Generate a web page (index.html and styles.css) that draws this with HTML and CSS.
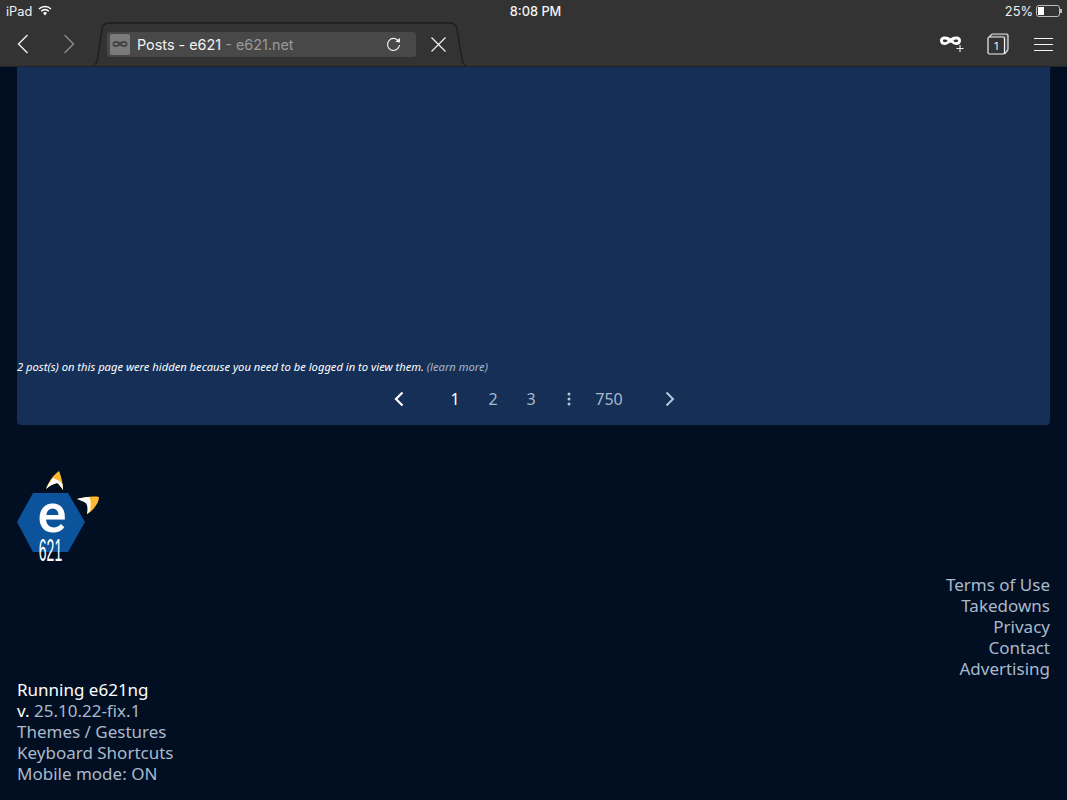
FILE: index.html
```html
<!DOCTYPE html>
<html lang="en">
<head>
  <meta charset="UTF-8">
  <title>Posts - e621</title>
  <link rel="stylesheet" href="styles.css">
</head>
<body>

  <!-- iOS status bar -->
  <div class="status-bar">
    <div class="status-left">
      <span>iPad</span>
      <svg class="wifi" width="14" height="11" viewBox="0 0 14 11">
        <path d="M1 4 A8.5 8.5 0 0 1 13 4" fill="none" stroke="#fff" stroke-width="1.6"/>
        <path d="M3.2 6.2 A5.4 5.4 0 0 1 10.8 6.2" fill="none" stroke="#fff" stroke-width="1.6"/>
        <path d="M5 8 L7 10.4 L9 8 A2.8 2.8 0 0 0 5 8 Z" fill="#fff"/>
      </svg>
    </div>
    <div class="status-time">8:08 PM</div>
    <div class="status-right">
      <span>25%</span>
      <div class="battery"><div class="battery-fill"></div></div>
      <div class="battery-tip"></div>
    </div>
  </div>

  <!-- Browser toolbar -->
  <div class="toolbar">
    <div class="nav-buttons">
      <svg width="12" height="20" viewBox="0 0 12 20"><path d="M10.5 1 L1.5 10 L10.5 19" fill="none" stroke="#f2f2f2" stroke-width="1.4"/></svg>
      <svg width="12" height="20" viewBox="0 0 12 20"><path d="M1.5 1 L10.5 10 L1.5 19" fill="none" stroke="#8a8a8a" stroke-width="1.4"/></svg>
    </div>

    <div class="tab">
      <svg class="tab-shape" width="376" height="45" viewBox="0 0 376 45">
        <path d="M0.5 44 C4 43 5 40 5.5 37 L10 7 C10.6 3 13 1 17 1 L358 1 C362 1 364.5 3 365 7 L370 37 C370.5 40 372 43 375 44" fill="none" stroke="#1d1d1d" stroke-width="1.3"/>
      </svg>
      <div class="address">
        <div class="favicon">
          <svg width="16" height="8" viewBox="0 0 16 8"><path d="M4 1 C6 1 7 2 8 2.5 C9 2 10 1 12 1 C14.5 1 15.5 2.5 15.5 4 C15.5 6 14 7 12 7 C10 7 9 5.5 8 5.5 C7 5.5 6 7 4 7 C2 7 0.5 6 0.5 4 C0.5 2.5 1.5 1 4 1 Z M4 2.8 C2.8 2.8 2.2 3.3 2.2 4 C2.2 4.8 3 5.2 4 5.2 C5.2 5.2 6 4.5 6.4 4 C6 3.5 5.2 2.8 4 2.8 Z M12 2.8 C10.8 2.8 10 3.5 9.6 4 C10 4.5 10.8 5.2 12 5.2 C13 5.2 13.8 4.8 13.8 4 C13.8 3.3 13.2 2.8 12 2.8 Z" fill="#3f3f3f" fill-rule="evenodd"/></svg>
        </div>
        <div class="address-text">Posts - e621 <span class="address-host">- e621.net</span></div>
        <svg class="reload" width="15" height="15" viewBox="0 0 15 15">
          <path d="M12.6 4.2 A6 6 0 1 0 13.5 8" fill="none" stroke="#f0f0f0" stroke-width="1.1"/>
          <path d="M9.2 4.8 L14 5.6 L14 1 Z" fill="#f0f0f0"/>
        </svg>
      </div>
      <svg class="tab-close" width="15" height="15" viewBox="0 0 15 15"><path d="M0.5 0.5 L14.5 14.5 M14.5 0.5 L0.5 14.5" stroke="#f2f2f2" stroke-width="1.2"/></svg>
    </div>

    <div class="toolbar-right">
      <svg class="mask-icon" width="26" height="18" viewBox="0 0 26 18">
        <path d="M6 1.5 C8.5 1.5 10 2.6 11.5 3.2 C13 2.6 14.5 1.5 17 1.5 C20.5 1.5 22 3.5 22 5.5 C22 8.5 20 10 17 10 C14.5 10 13 7.5 11.5 7.5 C10 7.5 8.5 10 6 10 C3 10 1 8.5 1 5.5 C1 3.5 2.5 1.5 6 1.5 Z M6 4.4 C4.6 4.4 3.8 4.9 3.8 5.6 C3.8 6.6 4.8 7.2 6 7.2 C7.2 7.2 8.2 6.4 8.8 5.8 C8.2 5.1 7.2 4.4 6 4.4 Z M17 4.4 C15.8 4.4 14.8 5.1 14.2 5.8 C14.8 6.4 15.8 7.2 17 7.2 C18.2 7.2 19.2 6.6 19.2 5.6 C19.2 4.9 18.4 4.4 17 4.4 Z" fill="#fff" fill-rule="evenodd"/>
        <path d="M21 10 V17 M17.5 13.5 H24.5" stroke="#f2f2f2" stroke-width="1.1"/>
      </svg>
      <svg width="22" height="22" viewBox="0 0 22 22">
        <path d="M1.5 5 L4 2 C4.5 1.3 5 1 6 1 H19.5 C20.5 1 21 1.5 21 2.5 V16 C21 17 20.7 17.5 20 18 L17.5 21" fill="#4a4a4a" stroke="#e6e6e6" stroke-width="1.2"/>
        <rect x="1" y="4" width="16.5" height="17" rx="1.5" fill="#333" stroke="#f2f2f2" stroke-width="1.2"/>
        <text x="9.2" y="17" text-anchor="middle" class="tab-count">1</text>
      </svg>
      <div class="menu-icon"><span></span><span></span><span></span></div>
    </div>
  </div>

  <div class="page">
    <!-- Posts panel, thumbnails hidden -->
    <div class="posts-panel">
      <div class="hidden-notice">2 post(s) on this page were hidden because you need to be logged in to view them. <a href="#">(learn more)</a></div>
      <div class="paginator">
        <svg class="pager-prev" width="10" height="16" viewBox="0 0 10 16"><path d="M8.5 1.5 L2 8 L8.5 14.5" fill="none" stroke="#fff" stroke-width="2.2"/></svg>
        <a class="current" href="#">1</a>
        <a href="#">2</a>
        <a href="#">3</a>
        <svg class="pager-dots" width="4" height="14" viewBox="0 0 4 14"><circle cx="2" cy="2" r="1.5"/><circle cx="2" cy="7" r="1.5"/><circle cx="2" cy="12" r="1.5"/></svg>
        <a href="#">750</a>
        <svg class="pager-next" width="10" height="16" viewBox="0 0 10 16"><path d="M1.5 1.5 L8 8 L1.5 14.5" fill="none" stroke="#b4c7d9" stroke-width="2"/></svg>
      </div>
    </div>

    <div class="footer">
      <svg class="logo" width="86" height="100" viewBox="0 0 86 100">
        <path d="M16 23 H51 L68 52 L51 82 H16 L0 52 Z" fill="#0b549c"/>
        <!-- top arrow -->
        <path d="M29 19 C31 13 36 5 42 1 C44 6 46 13 46 20 C44 17 42 14 40 13 C36 14 32 16 29 19 Z" fill="#fdba31"/>
        <path d="M29 19 C31 15 33 11 36 8 C39 9 43 11 45.5 14 L46 20 C44 17 42 14 40 13 C36 14 32 16 29 19 Z" fill="#fff"/>
        <!-- right arrow -->
        <path d="M60 29 C67 27 76 26 82 27 C82 33 76 41 70 44 C71 40 71 36 69 33 C66 31 63 30 60 29 Z" fill="#fdba31"/>
        <path d="M60 29 C64 28 68 27 72 27 C74 30 74 35 73 41 L70 44 C71 40 71 36 69 33 C66 31 63 30 60 29 Z" fill="#fff"/>
        <text class="logo-e" x="35" y="62" text-anchor="middle">e</text>
        <text class="logo-num" transform="translate(33.5 91) scale(1 2.2)" text-anchor="middle">621</text>
      </svg>

      <div class="footer-links">
        <a href="#">Terms of Use</a>
        <a href="#">Takedowns</a>
        <a href="#">Privacy</a>
        <a href="#">Contact</a>
        <a href="#">Advertising</a>
      </div>

      <div class="footer-info">
        <div class="running">Running e621ng</div>
        <div class="version">v. <a href="#">25.10.22-fix.1</a></div>
        <a href="#">Themes / Gestures</a>
        <a href="#">Keyboard Shortcuts</a>
        <a href="#">Mobile mode: ON</a>
      </div>
    </div>
  </div>

</body>
</html>
```

FILE: styles.css
```css
* {
  box-sizing: border-box;
}

html, body {
  height: 100%;
}

body {
  margin: 0;
  background-color: #020f23;
  color: #fff;
  font-family: "Noto Sans", sans-serif;
  overflow: hidden;
}

a {
  color: #a9b9ca;
  text-decoration: none;
}

/* status bar */
.status-bar {
  display: flex;
  justify-content: space-between;
  align-items: center;
  height: 22px;
  padding: 0 5px 0 6px;
  background-color: #333;
  font-family: Inter, sans-serif;
  font-size: 12.8px;
  color: #f2f2f2;
}

.status-left,
.status-right {
  display: flex;
  align-items: center;
  width: 200px;
}

.status-left {
  gap: 6px;
}

.status-right {
  justify-content: flex-end;
  gap: 3px;
}

.status-time {
  font-weight: 500;
  margin-left: 3px;
}

.wifi {
  margin-bottom: 2px;
}

.battery {
  width: 24px;
  height: 12px;
  border: 1px solid #bbb;
  border-radius: 3px;
  padding: 1px;
}

.battery-fill {
  width: 6px;
  height: 100%;
  background-color: #fff;
}

.battery-tip {
  width: 2px;
  height: 4px;
  margin-left: -3px;
  background-color: #bbb;
}

/* toolbar */
.toolbar {
  display: flex;
  align-items: center;
  height: 45px;
  background-color: #333;
  border-bottom: 1px solid #222;
}

.nav-buttons {
  display: flex;
  gap: 34px;
  padding-left: 17px;
}

.tab {
  position: relative;
  display: flex;
  align-items: center;
  width: 376px;
  height: 45px;
  margin-left: 17px;
  padding-left: 15px;
}

.tab-shape {
  position: absolute;
  left: 0;
  top: 0;
}

.address {
  display: flex;
  align-items: center;
  width: 309px;
  height: 25px;
  padding: 0 15px 0 3px;
  background-color: #484848;
  border-radius: 3px;
}

.favicon {
  display: flex;
  align-items: center;
  justify-content: center;
  width: 20px;
  height: 21px;
  background-color: #7b7b7b;
  border-radius: 2px;
}

.address-text {
  flex: 1;
  margin-left: 7px;
  font-family: Inter, sans-serif;
  font-size: 14.4px;
  color: #f2f2f2;
}

.address-host {
  color: #9a9a9a;
}

.tab-close {
  margin-left: 15px;
}

.toolbar-right {
  display: flex;
  align-items: center;
  margin-left: auto;
  gap: 25px;
  padding-right: 14px;
}

.mask-icon {
  margin-right: -3px;
}

.tab-count {
  font-family: Inter, sans-serif;
  font-size: 11px;
  fill: #e8e8e8;
}

.menu-icon {
  display: flex;
  flex-direction: column;
  gap: 5px;
  width: 19px;
}

.menu-icon span {
  height: 1px;
  background-color: #f2f2f2;
}

/* page */
.page {
  padding: 0 17px;
}

.posts-panel {
  display: flex;
  flex-direction: column;
  justify-content: flex-end;
  height: 358px;
  padding-bottom: 5px;
  background-color: #152f56;
  border-radius: 0 0 4px 4px;
}

.hidden-notice {
  font-size: 11.2px;
  font-style: italic;
  line-height: 14px;
  color: #fff;
}

.paginator {
  display: flex;
  justify-content: center;
  align-items: center;
  height: 42px;
  margin-top: 4px;
  padding-left: 2px;
  font-size: 16px;
}

.paginator a {
  min-width: 38px;
  text-align: center;
}

.paginator .current {
  color: #fff;
}

.pager-prev {
  margin-right: 32px;
}

.pager-next {
  margin-left: 37px;
}

.pager-dots {
  margin: 0 19px 0 17px;
  fill: #b4c7d9;
}

/* footer */
.footer {
  display: flex;
  flex-direction: column;
  font-size: 17px;
  line-height: 21px;
}

.logo {
  margin-top: 45px;
  margin-bottom: -6px;
}

.logo-e {
  font-family: Roboto, sans-serif;
  font-size: 54px;
  font-weight: 500;
  fill: #fff;
}

.logo-num {
  font-family: "Liberation Sans", sans-serif;
  font-size: 14px;
  fill: #fff;
}

.footer-links {
  display: flex;
  flex-direction: column;
  align-items: flex-end;
  margin-top: 10px;
}

.footer-info {
  display: flex;
  flex-direction: column;
  align-items: flex-start;
}

.running,
.version {
  color: #fff;
}
```
